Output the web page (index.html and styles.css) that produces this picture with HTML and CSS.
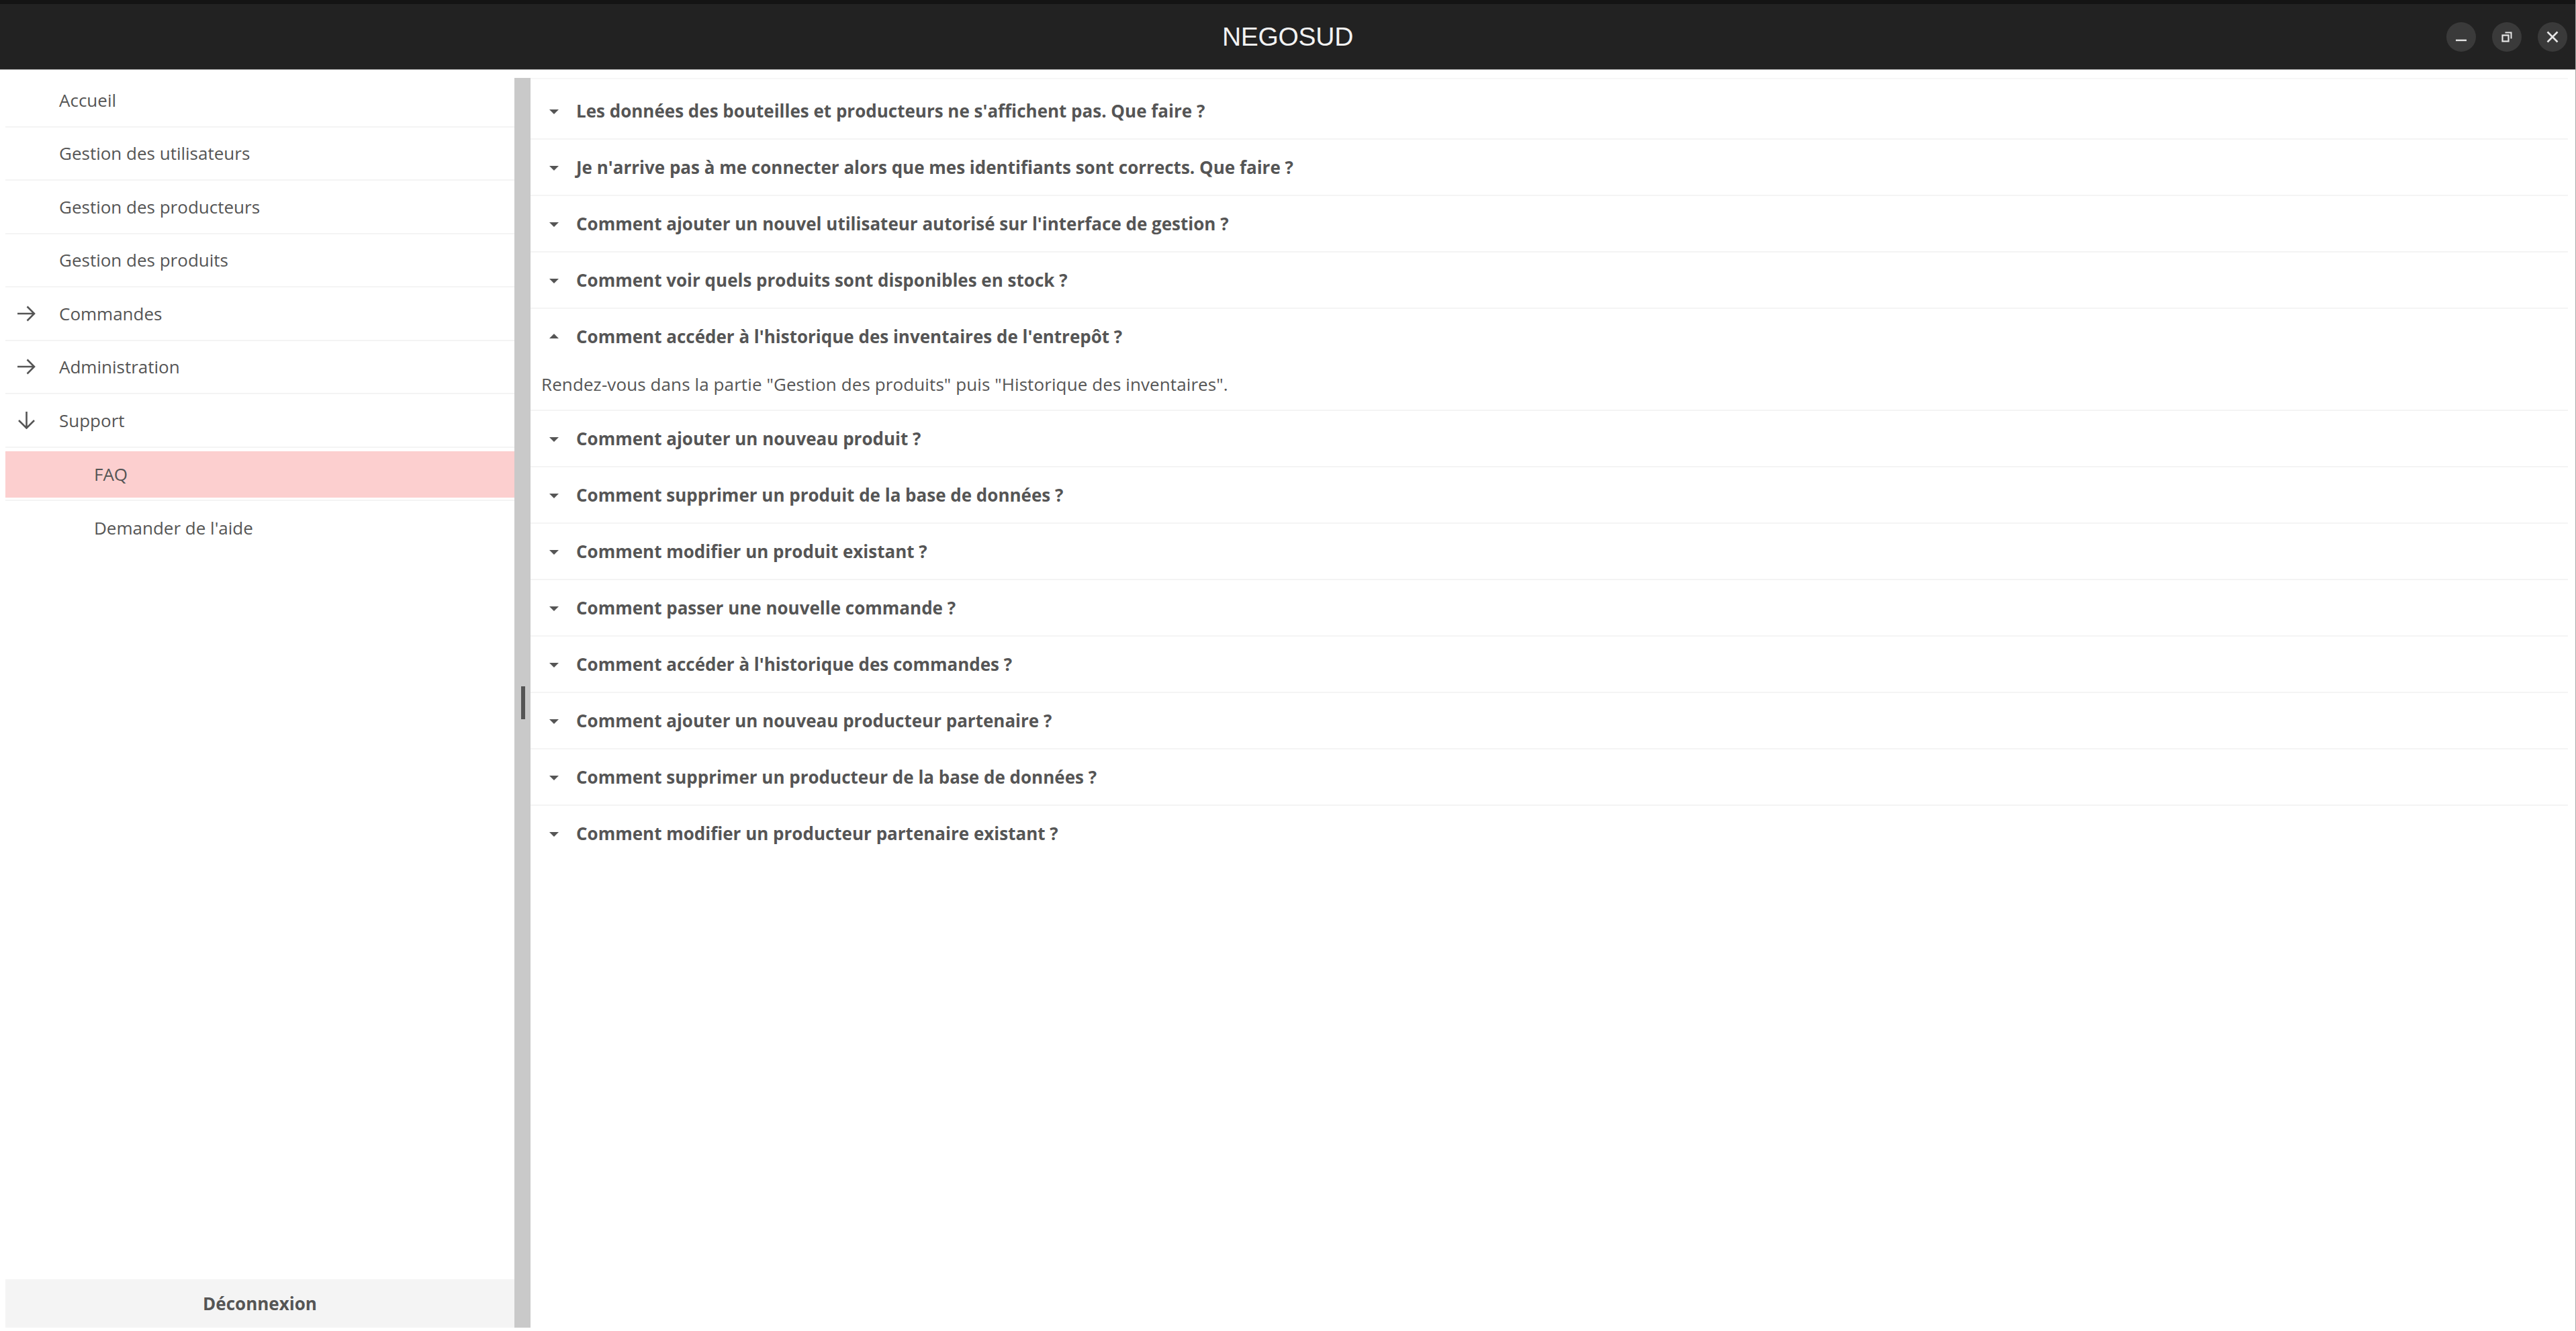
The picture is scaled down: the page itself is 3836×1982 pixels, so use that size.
FILE: index.html
```html
<!DOCTYPE html>
<html lang="fr">
<head>
<meta charset="utf-8">
<title>NEGOSUD</title>
<link rel="stylesheet" href="styles.css">
</head>
<body>
<div class="window">
  <header class="titlebar">
    <div class="title-spacer"></div>
    <div class="title">NEGOSUD</div>
    <div class="controls">
      <span class="ctl" aria-label="Réduire">
        <svg width="20" height="20" viewBox="0 0 20 20"><path d="M2 15h16" stroke="#e6e6e6" stroke-width="2.4" fill="none"/></svg>
      </span>
      <span class="ctl" aria-label="Restaurer">
        <svg width="20" height="20" viewBox="0 0 20 20"><path d="M7.5 3.5h9v9" stroke="#e6e6e6" stroke-width="2" fill="none"/><rect x="3.5" y="7.5" width="9" height="9" stroke="#e6e6e6" stroke-width="2.2" fill="none"/></svg>
      </span>
      <span class="ctl" aria-label="Fermer">
        <svg width="20" height="20" viewBox="0 0 20 20"><path d="M2.5 2.5l15 15M17.5 2.5l-15 15" stroke="#e6e6e6" stroke-width="2.6" fill="none"/></svg>
      </span>
    </div>
  </header>

  <div class="main">
    <aside class="sidebar">
      <nav class="menu">
        <a class="item"><span class="icon"></span><span class="label">Accueil</span></a>
        <a class="item"><span class="icon"></span><span class="label">Gestion des utilisateurs</span></a>
        <a class="item"><span class="icon"></span><span class="label">Gestion des producteurs</span></a>
        <a class="item"><span class="icon"></span><span class="label">Gestion des produits</span></a>
        <a class="item"><span class="icon"><svg width="29" height="24" viewBox="0 0 29 24"><path d="M1 12h25M15.5 1.5L26 12 15.5 22.5" stroke="#555" stroke-width="2.6" fill="none"/></svg></span><span class="label">Commandes</span></a>
        <a class="item"><span class="icon"><svg width="29" height="24" viewBox="0 0 29 24"><path d="M1 12h25M15.5 1.5L26 12 15.5 22.5" stroke="#555" stroke-width="2.6" fill="none"/></svg></span><span class="label">Administration</span></a>
        <a class="item"><span class="icon"><svg width="29" height="26" viewBox="0 0 29 26"><path d="M14.5 0v24M3 13l11.5 11.5L26 13" stroke="#555" stroke-width="2.6" fill="none"/></svg></span><span class="label">Support</span></a>
        <a class="item sub active"><span class="hl">FAQ</span></a>
        <a class="item sub last"><span class="hl">Demander de l'aide</span></a>
      </nav>
      <button class="logout">Déconnexion</button>
    </aside>

    <div class="splitter"><span class="grip"></span></div>

    <section class="content">
      <ul class="faq">
        <li class="faq-item"><div class="q"><span class="caret"></span>Les données des bouteilles et producteurs ne s'affichent pas. Que faire ?</div></li>
        <li class="faq-item"><div class="q"><span class="caret"></span>Je n'arrive pas à me connecter alors que mes identifiants sont corrects. Que faire ?</div></li>
        <li class="faq-item"><div class="q"><span class="caret"></span>Comment ajouter un nouvel utilisateur autorisé sur l'interface de gestion ?</div></li>
        <li class="faq-item"><div class="q"><span class="caret"></span>Comment voir quels produits sont disponibles en stock ?</div></li>
        <li class="faq-item open"><div class="q"><span class="caret"></span>Comment accéder à l'historique des inventaires de l'entrepôt ?</div>
          <div class="answer">Rendez-vous dans la partie "Gestion des produits" puis "Historique des inventaires".</div></li>
        <li class="faq-item"><div class="q"><span class="caret"></span>Comment ajouter un nouveau produit ?</div></li>
        <li class="faq-item"><div class="q"><span class="caret"></span>Comment supprimer un produit de la base de données ?</div></li>
        <li class="faq-item"><div class="q"><span class="caret"></span>Comment modifier un produit existant ?</div></li>
        <li class="faq-item"><div class="q"><span class="caret"></span>Comment passer une nouvelle commande ?</div></li>
        <li class="faq-item"><div class="q"><span class="caret"></span>Comment accéder à l'historique des commandes ?</div></li>
        <li class="faq-item"><div class="q"><span class="caret"></span>Comment ajouter un nouveau producteur partenaire ?</div></li>
        <li class="faq-item"><div class="q"><span class="caret"></span>Comment supprimer un producteur de la base de données ?</div></li>
        <li class="faq-item last"><div class="q"><span class="caret"></span>Comment modifier un producteur partenaire existant ?</div></li>
      </ul>
    </section>
  </div>
</div>
</body>
</html>
```

FILE: styles.css
```css
* { box-sizing: border-box; }

html, body {
  margin: 0;
  padding: 0;
  background: #ffffff;
}

body {
  font-family: "Open Sans", "Noto Sans", "Liberation Sans", sans-serif;
  color: #555555;
  font-size: 26px;
}

.window {
  width: 3836px;
  height: 1982px;
  display: flex;
  flex-direction: column;
  border-right: 1px solid #a8a8a8;
  overflow: hidden;
}

/* ---------- title bar ---------- */
.titlebar {
  height: 104px;
  flex: none;
  background: #222222;
  border-top: 6px solid #141414;
  border-bottom: 1px solid #9a9a9a;
  display: grid;
  grid-template-columns: 1fr auto 1fr;
  align-items: center;
}

.title {
  font-family: "Liberation Sans", Arial, sans-serif;
  font-size: 39px;
  color: #f2f2f2;
  letter-spacing: -0.3px;
}

.controls {
  justify-self: end;
  display: flex;
  gap: 24px;
  padding-right: 12px;
}

.ctl {
  width: 44px;
  height: 44px;
  border-radius: 50%;
  background: #3a3a3a;
  display: flex;
  align-items: center;
  justify-content: center;
}

.ctl svg { display: block; }

/* ---------- main area ---------- */
.main {
  flex: 1;
  display: flex;
  padding: 0 11px 5px 8px;
  min-height: 0;
}

.sidebar {
  width: 758px;
  flex: none;
  display: flex;
  flex-direction: column;
  padding-top: 6px;
}

.menu {
  flex: 1;
  display: flex;
  flex-direction: column;
}

.item {
  height: 79.5px;
  border-bottom: 2px solid #f4f4f4;
  display: flex;
  align-items: center;
  padding-left: 17px;
  color: #555;
  cursor: default;
}

.item.last {
  border-bottom-color: transparent;
}

.icon {
  width: 29px;
  height: 26px;
  margin-right: 34px;
  display: flex;
  align-items: center;
}

.icon svg { display: block; }

.item.sub {
  padding-left: 0;
  align-items: stretch;
}

.item.sub .hl {
  flex: 1;
  display: flex;
  align-items: center;
  padding-left: 132px;
  margin: 5px 0 3px;
}

.item.active .hl {
  background: #fccfcf;
}

.logout {
  height: 72px;
  flex: none;
  border: 0;
  background: #f4f4f4;
  color: #555;
  font-family: "Open Sans", "Noto Sans", sans-serif;
  font-weight: 700;
  font-size: 26px;
  padding: 0;
}

.splitter {
  width: 24px;
  flex: none;
  margin-top: 12px;
  background: #c9c9c9;
  display: flex;
  align-items: center;
  justify-content: center;
}

.grip {
  display: block;
  width: 6px;
  height: 49px;
  background: #555;
  margin-left: 2px;
}

/* ---------- FAQ ---------- */
.content {
  flex: 1;
  padding-top: 12px;
  min-width: 0;
}

.faq {
  list-style: none;
  margin: 0;
  padding: 6px 0 0;
  border-top: 2px solid #f6f6f6;
}

.faq-item {
  border-bottom: 2px solid #f4f4f4;
}

.faq-item.last {
  border-bottom: 0;
}

.q {
  height: 82px;
  display: flex;
  align-items: center;
  padding-left: 28px;
  font-weight: 700;
  color: #555;
  white-space: nowrap;
}

.caret {
  width: 0;
  height: 0;
  border-left: 7.5px solid transparent;
  border-right: 7.5px solid transparent;
  border-top: 7px solid #555;
  margin-right: 26px;
  margin-top: 2px;
}

.open .caret {
  border-top: 0;
  border-bottom: 7px solid #555;
  margin-top: -2px;
}

.answer {
  padding: 12px 16px 20px;
  line-height: 36px;
  color: #555;
  letter-spacing: 0.1px;
}
```
